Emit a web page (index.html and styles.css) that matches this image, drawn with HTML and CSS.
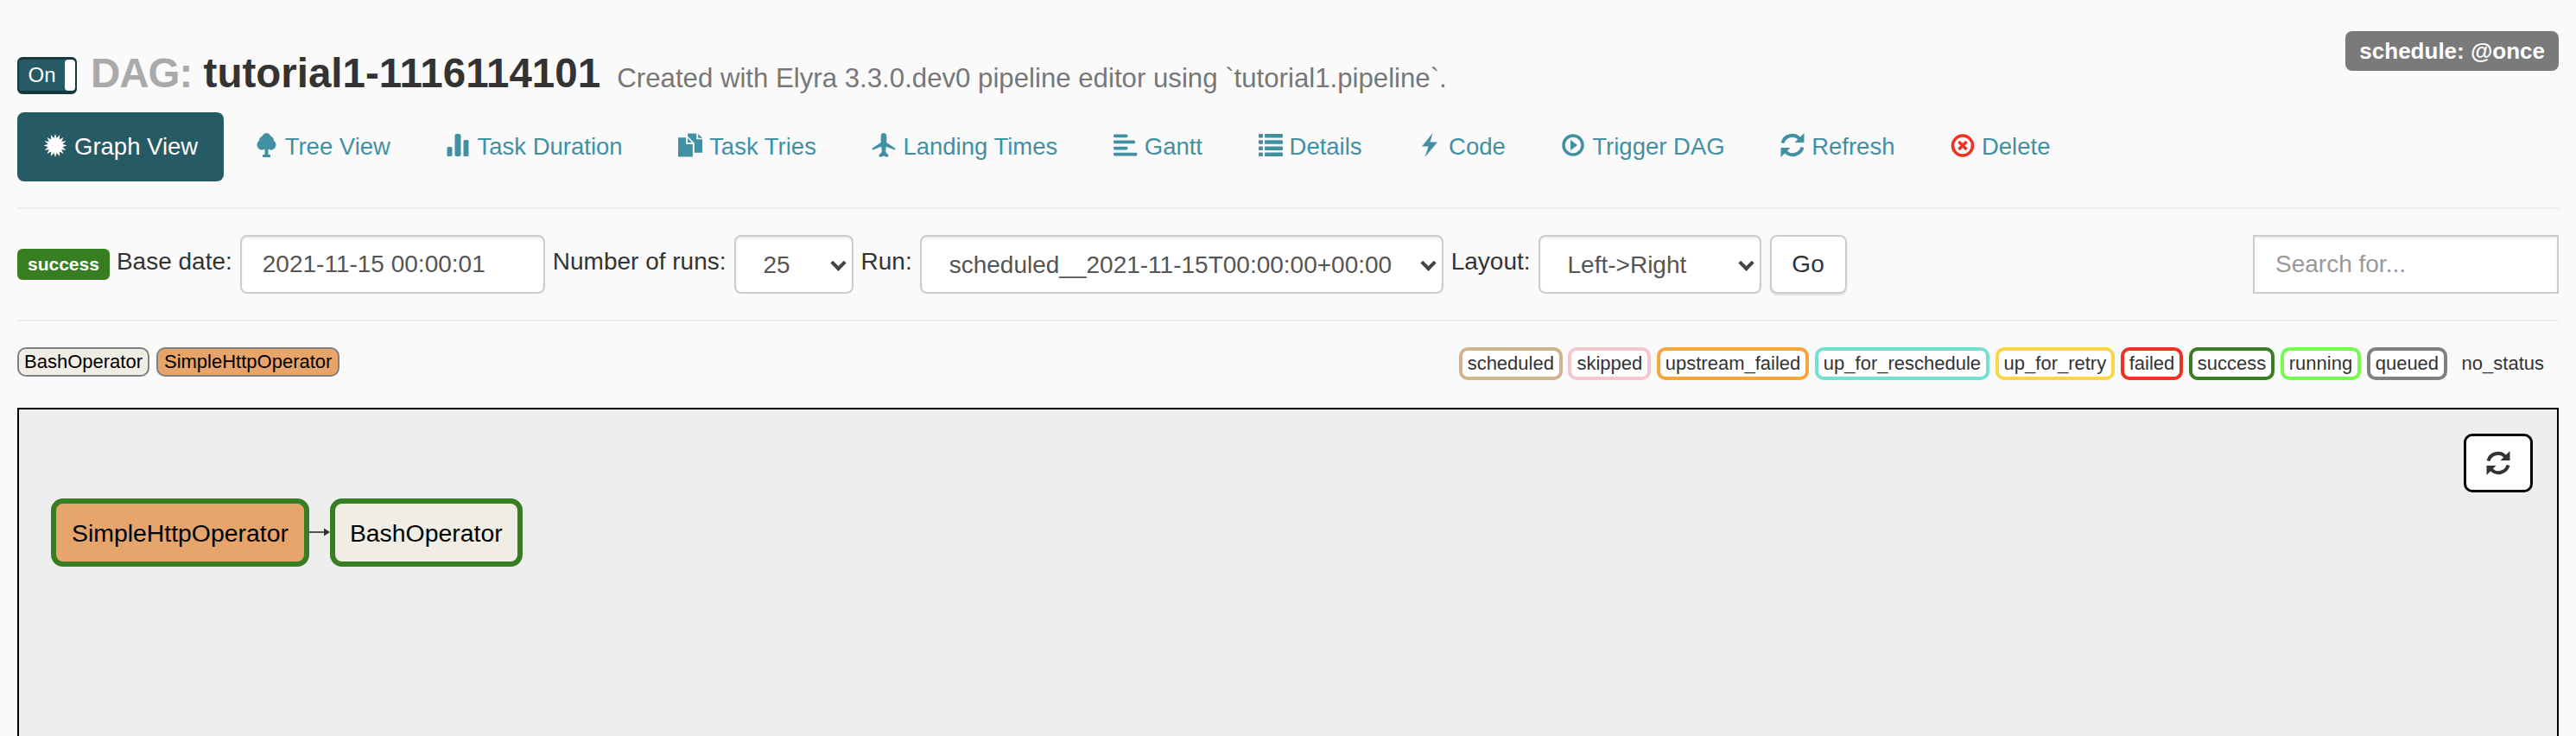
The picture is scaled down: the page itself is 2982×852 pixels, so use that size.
FILE: index.html
```html
<!DOCTYPE html>
<html lang="en">
<head>
    <meta charset="UTF-8">
    <title>tutorial1-1116114101 - Graph View</title>
    <link rel="stylesheet" href="styles.css">
</head>
<body>

<header class="dag-header">
    <div class="dag-title">
        <div class="toggle"><span class="toggle-on">On</span><span class="toggle-handle"></span></div>
        <h3>
            <span class="dag-prefix">DAG:</span>
            <span class="dag-name">tutorial1-1116114101</span>
            <small>Created with Elyra 3.3.0.dev0 pipeline editor using `tutorial1.pipeline`.</small>
        </h3>
    </div>
    <span class="schedule">schedule: @once</span>
</header>

<nav class="nav">
    <a class="nav-item active" href="#">
        <svg class="icon" height="27" viewBox="0 0 24 24"><polygon points="12,0 13.49,4.55 16.59,.91 16.23,5.68 20.49,3.51 18.32,7.77 23.09,7.41 19.45,10.51 24,12 19.45,13.49 23.09,16.59 18.32,16.23 20.49,20.49 16.23,18.32 16.59,23.09 13.49,19.45 12,24 10.51,19.45 7.41,23.09 7.77,18.32 3.51,20.49 5.68,16.23 .91,16.59 4.55,13.49 0,12 4.55,10.51 .91,7.41 5.68,7.77 3.51,3.51 7.77,5.68 7.41,.91 10.51,4.55"/></svg>
        Graph View
    </a>
    <a class="nav-item" href="#">
        <svg class="icon" height="28" viewBox="0 0 23 28"><path d="M11.5 0a6 6 0 0 1 5.6 3.8 5.6 5.6 0 0 1 3.4 5.2c1.6 1 2.5 2.6 2.5 4.5 0 3.4-2.6 6-5.7 6-1.3 0-2.4-.3-3.3-1v6.5h2.5v3h-9v-3h2.500v-6.500c-.9.7-2 1-3.300 1-3.100 0-5.700-2.600-5.700-6 0-1.900.9-3.500 2.500-4.500a5.600 5.600 0 0 1 3.400-5.200A6 6 0 0 1 11.500 0z"/></svg>
        Tree View
    </a>
    <a class="nav-item" href="#">
        <svg class="icon" height="26" viewBox="0 0 25 26"><rect x="0" y="15" width="6" height="11" rx="1.5"/><rect x="9" y="0" width="7" height="26" rx="2"/><rect x="19" y="7" width="6" height="19" rx="1.5"/></svg>
        Task Duration
    </a>
    <a class="nav-item" href="#">
        <svg class="icon" height="28" viewBox="0 0 29 28"><path d="M11.5 0H22v7h7v16h-9.5V11.5L11.5 3.5z"/><path d="M24 .5l5 5h-5z"/><path d="M0 5h9.5v8h8v15H0z"/><path d="M11.5 5.500l5 5.500h-5z"/></svg>
        Task Tries
    </a>
    <a class="nav-item" href="#">
        <svg class="icon" height="28" viewBox="0 0 27 28"><path d="M13.5 0c2 0 3.300 1.700 3.300 3.800v7.200l9.700 6.500c.6.4.6 1 .2 1.400l-.5.5-9.900-3.600-.6 6.200 3.500 3.700-1.300 2.300-4.400-1.600-4.400 1.600-1.300-2.300 3.500-3.700-.6-6.200-9.900 3.600-.5-.5c-.4-.4-.4-1 .2-1.400l9.700-6.500V3.800c0-2.100 1.300-3.800 3.300-3.800z"/></svg>
        Landing Times
    </a>
    <a class="nav-item" href="#">
        <svg class="icon" height="26" viewBox="0 0 29 26"><rect width="17" height="4" rx="1.5"/><rect y="7.3" width="26" height="4" rx="1.5"/><rect y="14.7" width="17" height="4" rx="1.5"/><rect y="22" width="28.5" height="4" rx="1.5"/></svg>
        Gantt
    </a>
    <a class="nav-item" href="#">
        <svg class="icon" height="26" viewBox="0 0 28 26"><rect width="5" height="4.5" rx="1"/><rect x="7" width="21" height="4.5" rx="1"/><rect y="7.2" width="5" height="4.5" rx="1"/><rect x="7" y="7.2" width="21" height="4.5" rx="1"/><rect y="14.4" width="5" height="4.5" rx="1"/><rect x="7" y="14.4" width="21" height="4.5" rx="1"/><rect y="21.5" width="5" height="4.5" rx="1"/><rect x="7" y="21.5" width="21" height="4.5" rx="1"/></svg>
        Details
    </a>
    <a class="nav-item" href="#">
        <svg class="icon" height="28" viewBox="0 0 20 28"><path d="M13.5 0L1 15.5h7.500L4.500 28 19 10.500h-8.500z"/></svg>
        Code
    </a>
    <a class="nav-item" href="#">
        <svg class="icon" height="28" viewBox="0 0 26 28"><circle cx="13" cy="14" r="11" fill="none" stroke="currentColor" stroke-width="3.5"/><path d="M10 8l8 6-8 6z"/></svg>
        Trigger DAG
    </a>
    <a class="nav-item" href="#">
        <svg class="icon" height="28" viewBox="0 0 28 28"><path d="M2.5 11.5A11.5 11.5 0 0 1 22 6.5M25.5 16.5A11.5 11.5 0 0 1 6 21.5" fill="none" stroke="currentColor" stroke-width="4"/><path d="M27.5 0v11h-11zM.5 28V17h11z"/></svg>
        Refresh
    </a>
    <a class="nav-item" href="#">
        <svg class="icon icon-delete" height="27" viewBox="0 0 27 27"><circle cx="13.5" cy="13.5" r="11.5" fill="none" stroke="currentColor" stroke-width="3.5"/><path d="M9 9l9 9M18 9l-9 9" fill="none" stroke="currentColor" stroke-width="3.6"/></svg>
        Delete
    </a>
</nav>

<hr>

<form class="run-form">
    <span class="state-badge">success</span>
    <label for="base-date">Base date:</label>
    <input class="field date-field" id="base-date" type="text" value="2021-11-15 00:00:01">
    <label for="num-runs">Number of runs:</label>
    <div class="select-wrap runs-select">
        <select class="field" id="num-runs"><option>25</option></select>
    </div>
    <label for="run">Run:</label>
    <div class="select-wrap run-select">
        <select class="field" id="run"><option>scheduled__2021-11-15T00:00:00+00:00</option></select>
    </div>
    <label for="layout">Layout:</label>
    <div class="select-wrap layout-select">
        <select class="field" id="layout"><option>Left-&gt;Right</option></select>
    </div>
    <button class="go-btn" type="button">Go</button>
    <input class="field search-field" type="text" placeholder="Search for...">
</form>

<hr>

<div class="legend-row">
    <div class="legend-left">
        <span class="op op-bash">BashOperator</span>
        <span class="op op-http">SimpleHttpOperator</span>
    </div>
    <div class="legend-right">
        <span class="status st-scheduled">scheduled</span>
        <span class="status st-skipped">skipped</span>
        <span class="status st-upstream">upstream_failed</span>
        <span class="status st-reschedule">up_for_reschedule</span>
        <span class="status st-retry">up_for_retry</span>
        <span class="status st-failed">failed</span>
        <span class="status st-success">success</span>
        <span class="status st-running">running</span>
        <span class="status st-queued">queued</span>
        <span class="status st-none">no_status</span>
    </div>
</div>

<section class="graph">
    <button class="graph-refresh" type="button">
        <svg width="28" height="28" viewBox="0 0 28 28"><path d="M2.5 11.5A11.5 11.5 0 0 1 22 6.5M25.5 16.5A11.5 11.5 0 0 1 6 21.5" fill="none" stroke="currentColor" stroke-width="4"/><path d="M27.5 0v11h-11zM.5 28V17h11z"/></svg>
    </button>
    <div class="dag-flow">
        <div class="node node-http">SimpleHttpOperator</div>
        <svg class="edge" width="24" height="14" viewBox="0 0 24 14"><path d="M0 7h18" stroke="#555" stroke-width="2"/><path d="M17 2.5l7 4.5-7 4.5z" fill="#333"/></svg>
        <div class="node node-bash">BashOperator</div>
    </div>
</section>

</body>
</html>
```

FILE: styles.css
```css
html, body {
    height: 852px;
    overflow: hidden;
}
body {
    font-family: "Liberation Sans", Arial, sans-serif;
    font-size: 28px;
    color: #333;
    background-color: #fafafa;
    margin: 0;
    padding: 36px 20px 0;
    box-sizing: border-box;
}

/* header */
.dag-header {
    display: flex;
    justify-content: space-between;
    align-items: flex-start;
    height: 94px;
}
.dag-title {
    display: flex;
    align-items: flex-start;
    gap: 16px;
    margin-top: 30px;
}
.toggle {
    display: flex;
    width: 69px;
    height: 43px;
    box-sizing: border-box;
    border: 2px solid #15393f;
    border-top-width: 3px;
    border-bottom-width: 4px;
    border-radius: 6px;
    background-color: #265a65;
    overflow: hidden;
}
.toggle-on {
    flex: 1;
    color: #fff;
    font-size: 24px;
    line-height: 36px;
    text-align: center;
}
.toggle-handle {
    width: 12px;
    background-color: #fff;
    border-radius: 4px;
}
h3 {
    margin: -2px 0 0;
    font-size: 47.5px;
    line-height: 42px;
    font-weight: bold;
    white-space: nowrap;
}
.dag-prefix {
    color: #aaa;
    letter-spacing: -1px;
}
.dag-name {
    color: #333;
}
h3 small {
    margin-left: 6px;
    font-size: 31.2px;
    font-weight: normal;
    color: #777;
}
.schedule {
    padding: 0 16px;
    line-height: 46px;
    font-size: 26px;
    font-weight: bold;
    color: #fff;
    background-color: #7a7a7a;
    border-radius: 8px;
}

/* nav pills */
.nav {
    display: flex;
    gap: 4.5px;
    height: 80px;
    font-size: 27.5px;
}
.nav-item {
    display: flex;
    align-items: center;
    gap: 8px;
    padding: 0 30px;
    color: #4190a4;
    text-decoration: none;
    border-radius: 8px;
    white-space: nowrap;
}
.nav-item.active {
    color: #fff;
    background-color: #265a65;
}
.icon {
    flex: none;
    width: 28px;
    fill: currentColor;
    margin-top: -4px;
}
.icon-delete {
    color: #eb3223;
    fill: #eb3223;
}

hr {
    border: 0;
    border-top: 2px solid #eee;
    margin: 30px 0;
}

/* form row */
.run-form {
    display: flex;
    align-items: center;
    gap: 9px;
    height: 68px;
}
.run-form label {
    margin-bottom: 6px;
    white-space: nowrap;
}
.state-badge {
    margin-right: -1px;
    padding: 0 12px;
    font-size: 21px;
    font-weight: bold;
    line-height: 36px;
    color: #fff;
    background-color: #377d22;
    border-radius: 6px;
}
.field {
    display: block;
    box-sizing: border-box;
    width: 100%;
    height: 68px;
    padding: 0 24px;
    font-family: inherit;
    font-size: 28px;
    color: #555;
    background-color: #fff;
    border: 2px solid #ccc;
    border-radius: 8px;
    box-shadow: inset 0 2px 2px rgba(0, 0, 0, .075);
    outline: none;
}
.date-field {
    width: 353px;
}
.select-wrap {
    position: relative;
}
.select-wrap select {
    appearance: none;
    padding-left: 32px;
}
.select-wrap::after {
    content: "";
    position: absolute;
    right: 11px;
    top: 26px;
    width: 9px;
    height: 9px;
    border-right: 4px solid #444;
    border-bottom: 4px solid #444;
    transform: rotate(45deg);
    pointer-events: none;
}
.runs-select {
    width: 138px;
}
.run-select {
    width: 606px;
}
.layout-select {
    width: 258px;
}
.go-btn {
    width: 89px;
    height: 68px;
    margin-left: 1px;
    font-family: inherit;
    font-size: 28px;
    color: #333;
    background-color: #fff;
    border: 2px solid #ccc;
    border-radius: 8px;
    box-shadow: 0 2px 2px rgba(0, 0, 0, .1);
}
.search-field {
    width: 354px;
    margin-left: auto;
    border-radius: 0;
}
.search-field::placeholder {
    color: #999;
}

/* legends */
.legend-row {
    display: flex;
    justify-content: space-between;
    align-items: flex-start;
    height: 70px;
    font-size: 22px;
}
.legend-left {
    display: flex;
    gap: 8px;
}
.op {
    padding: 0 7px;
    line-height: 30px;
    color: #000;
    border: 2px solid #808080;
    border-radius: 10px;
}
.op-bash {
    padding: 0 6px;
    background-color: #f0ede4;
}
.op-http {
    background-color: #e8a56b;
}
.legend-right {
    display: flex;
    gap: 6.5px;
    padding-right: 7px;
}
.status {
    padding: 0 6px;
    line-height: 30px;
    border: 4px solid #fff;
    border-radius: 10px;
    background-color: #fff;
}
.st-scheduled { border-color: #d2b48c; }
.st-skipped { border-color: #f6c6d0; }
.st-upstream { border-color: #f6a73c; }
.st-reschedule { border-color: #76e0d0; }
.st-retry { border-color: #fbd643; }
.st-failed { border-color: #eb3223; }
.st-success { border-color: #377d22; }
.st-running { border-color: #75fb4c; }
.st-queued { border-color: #808080; }
.st-none { border-color: #fafafa; background-color: #fafafa; }

/* graph */
.graph {
    position: relative;
    height: 420px;
    box-sizing: border-box;
    padding: 103px 37px 0;
    background-color: #eee;
    border: 2px solid #000;
}
.graph-refresh {
    position: absolute;
    top: 28px;
    right: 28px;
    display: flex;
    align-items: center;
    justify-content: center;
    width: 80px;
    height: 68px;
    padding: 0;
    color: #333;
    fill: #333;
    background-color: #fff;
    border: 3px solid #000;
    border-radius: 10px;
}
.dag-flow {
    display: flex;
    align-items: center;
}
.node {
    display: flex;
    align-items: center;
    box-sizing: border-box;
    height: 79px;
    padding: 2px 18px 0;
    font-size: 28.4px;
    color: #000;
    border: 6px solid #377d22;
    border-radius: 14px;
}
.node-http {
    background-color: #e8a56b;
}
.node-bash {
    padding: 2px 17px 0;
    background-color: #f0ede4;
}
.edge {
    flex: none;
    margin-top: -2px;
}
```
